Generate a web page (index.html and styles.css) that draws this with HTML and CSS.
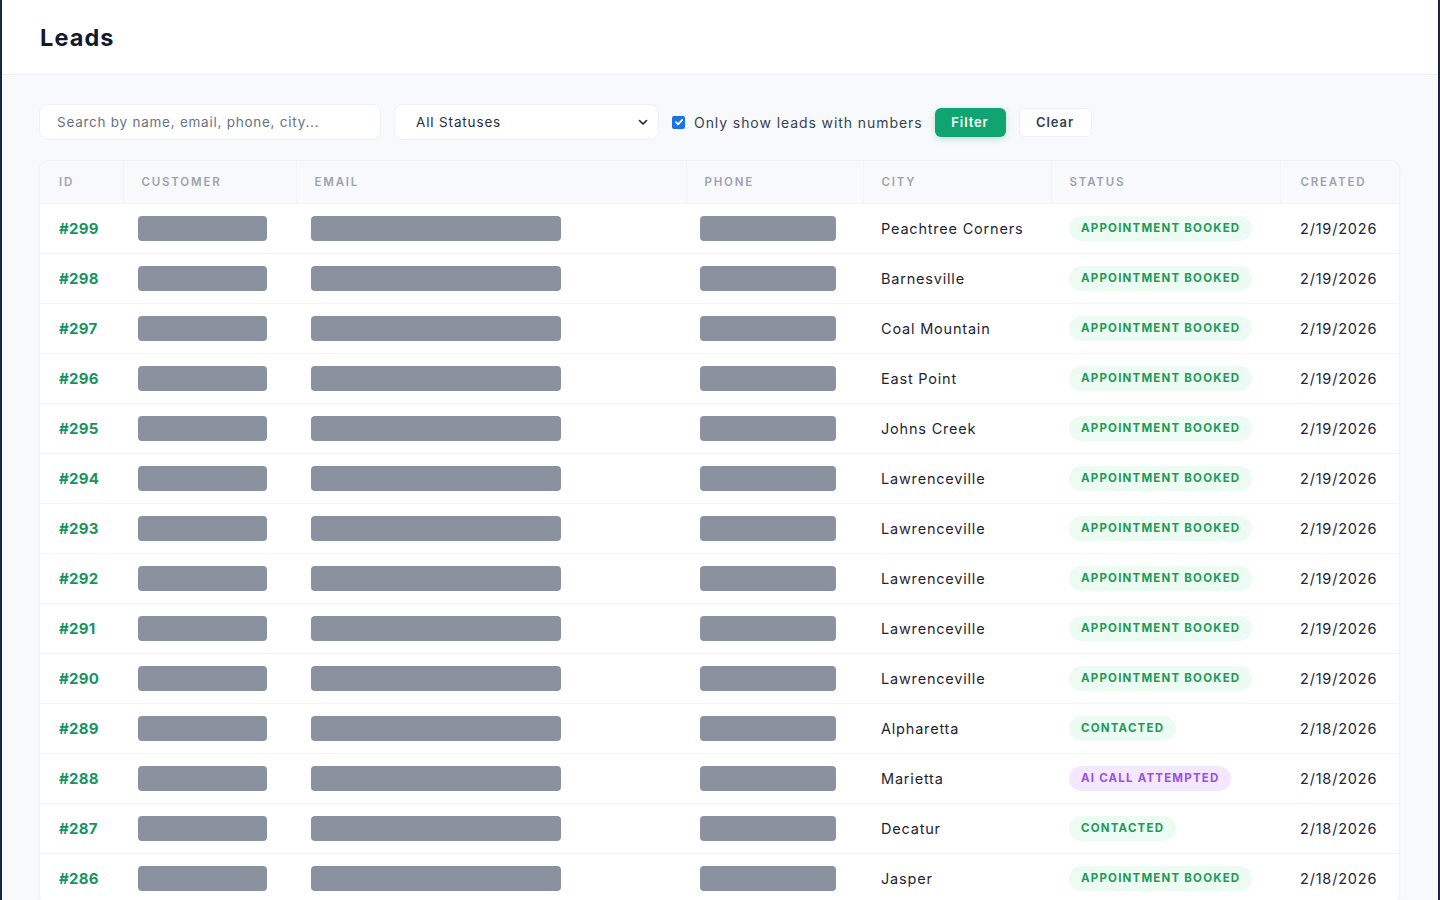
FILE: index.html
```html
<!DOCTYPE html>
<html lang="en">
<head>
<meta charset="utf-8">
<title>Leads</title>
<link rel="stylesheet" href="styles.css">
</head>
<body>
<header class="topbar">
  <h1 class="title">Leads</h1>
</header>
<main class="main">
  <div class="filters">
    <input class="search" type="text" placeholder="Search by name, email, phone, city...">
    <div class="select">
      <span>All Statuses</span>
      <svg class="chev" width="12" height="12" viewBox="0 0 12 12"><path d="M2.5 4.5 6 8l3.5-3.5" fill="none" stroke="#222" stroke-width="1.6" stroke-linecap="round" stroke-linejoin="round"/></svg>
    </div>
    <label class="check">
      <span class="box"><svg width="10" height="10" viewBox="0 0 10 10"><path d="M2 5.2 4.1 7.3 8.2 2.8" fill="none" stroke="#fff" stroke-width="1.8" stroke-linecap="round" stroke-linejoin="round"/></svg></span>
      <span>Only show leads with numbers</span>
    </label>
    <button class="btn btn-primary">Filter</button>
    <button class="btn btn-light">Clear</button>
  </div>

  <div class="card">
    <table class="leads">
      <colgroup>
        <col class="c-id"><col class="c-cust"><col class="c-email"><col class="c-phone"><col class="c-city"><col class="c-status"><col class="c-created">
      </colgroup>
      <thead>
        <tr><th>ID</th><th>Customer</th><th>Email</th><th>Phone</th><th>City</th><th>Status</th><th>Created</th></tr>
      </thead>
      <tbody>
        <tr><td class="id">#299</td><td><span class="bar bar-c"></span></td><td><span class="bar bar-e"></span></td><td><span class="bar bar-p"></span></td><td>Peachtree Corners</td><td><span class="badge green">Appointment Booked</span></td><td>2/19/2026</td></tr>
        <tr><td class="id">#298</td><td><span class="bar bar-c"></span></td><td><span class="bar bar-e"></span></td><td><span class="bar bar-p"></span></td><td>Barnesville</td><td><span class="badge green">Appointment Booked</span></td><td>2/19/2026</td></tr>
        <tr><td class="id">#297</td><td><span class="bar bar-c"></span></td><td><span class="bar bar-e"></span></td><td><span class="bar bar-p"></span></td><td>Coal Mountain</td><td><span class="badge green">Appointment Booked</span></td><td>2/19/2026</td></tr>
        <tr><td class="id">#296</td><td><span class="bar bar-c"></span></td><td><span class="bar bar-e"></span></td><td><span class="bar bar-p"></span></td><td>East Point</td><td><span class="badge green">Appointment Booked</span></td><td>2/19/2026</td></tr>
        <tr><td class="id">#295</td><td><span class="bar bar-c"></span></td><td><span class="bar bar-e"></span></td><td><span class="bar bar-p"></span></td><td>Johns Creek</td><td><span class="badge green">Appointment Booked</span></td><td>2/19/2026</td></tr>
        <tr><td class="id">#294</td><td><span class="bar bar-c"></span></td><td><span class="bar bar-e"></span></td><td><span class="bar bar-p"></span></td><td>Lawrenceville</td><td><span class="badge green">Appointment Booked</span></td><td>2/19/2026</td></tr>
        <tr><td class="id">#293</td><td><span class="bar bar-c"></span></td><td><span class="bar bar-e"></span></td><td><span class="bar bar-p"></span></td><td>Lawrenceville</td><td><span class="badge green">Appointment Booked</span></td><td>2/19/2026</td></tr>
        <tr><td class="id">#292</td><td><span class="bar bar-c"></span></td><td><span class="bar bar-e"></span></td><td><span class="bar bar-p"></span></td><td>Lawrenceville</td><td><span class="badge green">Appointment Booked</span></td><td>2/19/2026</td></tr>
        <tr><td class="id">#291</td><td><span class="bar bar-c"></span></td><td><span class="bar bar-e"></span></td><td><span class="bar bar-p"></span></td><td>Lawrenceville</td><td><span class="badge green">Appointment Booked</span></td><td>2/19/2026</td></tr>
        <tr><td class="id">#290</td><td><span class="bar bar-c"></span></td><td><span class="bar bar-e"></span></td><td><span class="bar bar-p"></span></td><td>Lawrenceville</td><td><span class="badge green">Appointment Booked</span></td><td>2/19/2026</td></tr>
        <tr><td class="id">#289</td><td><span class="bar bar-c"></span></td><td><span class="bar bar-e"></span></td><td><span class="bar bar-p"></span></td><td>Alpharetta</td><td><span class="badge green">Contacted</span></td><td>2/18/2026</td></tr>
        <tr><td class="id">#288</td><td><span class="bar bar-c"></span></td><td><span class="bar bar-e"></span></td><td><span class="bar bar-p"></span></td><td>Marietta</td><td><span class="badge purple">AI Call Attempted</span></td><td>2/18/2026</td></tr>
        <tr><td class="id">#287</td><td><span class="bar bar-c"></span></td><td><span class="bar bar-e"></span></td><td><span class="bar bar-p"></span></td><td>Decatur</td><td><span class="badge green">Contacted</span></td><td>2/18/2026</td></tr>
        <tr><td class="id">#286</td><td><span class="bar bar-c"></span></td><td><span class="bar bar-e"></span></td><td><span class="bar bar-p"></span></td><td>Jasper</td><td><span class="badge green">Appointment Booked</span></td><td>2/18/2026</td></tr>
      </tbody>
    </table>
  </div>
</main>
</body>
</html>
```

FILE: styles.css
```css
* { box-sizing: border-box; }
html, body { margin: 0; padding: 0; }
body {
  font-family: Inter, "Noto Sans", sans-serif;
  color: #1f2433;
  background: #f8f9fb;
  border-left: 2px solid #1b2440;
  border-right: 2px solid #1b2440;
  min-height: 900px;
  overflow: hidden;
}
.topbar {
  height: 75px;
  background: #fff;
  border-bottom: 1px solid #eef0f3;
  display: flex;
  align-items: center;
  padding-left: 38px;
}
.title {
  margin: 0;
  font-size: 23.5px;
  font-weight: 700;
  color: #141a2e;
  letter-spacing: 1.1px;
}
.main { padding: 29px 38px 0 37px; }
.filters {
  display: flex;
  align-items: center;
  height: 36px;
  margin-bottom: 20px;
}
.search {
  width: 342px;
  height: 36px;
  border: 1px solid #eef0f3;
  border-radius: 9px;
  background: #fff;
  padding: 0 17px;
  font: 13.5px Inter, sans-serif;
  color: #333;
  outline: none;
  letter-spacing: 0.75px;
}
.search::placeholder { color: #6b7280; }
.select {
  margin-left: 13px;
  width: 265px;
  height: 36px;
  border: 1px solid #eef0f3;
  border-radius: 9px;
  background: #fff;
  display: flex;
  align-items: center;
  justify-content: space-between;
  padding: 0 9px 0 21px;
  font-size: 13.5px;
  color: #2a2f3d;
  letter-spacing: 0.85px;
}
.check {
  margin-left: 13px;
  display: flex;
  align-items: center;
  gap: 9px;
  font-size: 14px;
  color: #374151;
  letter-spacing: 0.92px;
}
.box {
  width: 13px; height: 13px;
  border-radius: 2px;
  background: #1a73e8;
  display: flex; align-items: center; justify-content: center;
}
.btn {
  height: 29px;
  border-radius: 6px;
  font: 600 13px Inter, sans-serif;
  letter-spacing: 0.9px;
  padding: 0;
  cursor: pointer;
}
.btn-primary {
  margin-left: 12px;
  background: #10a570;
  color: #fff;
  border: none;
  width: 71px;
  box-shadow: 0 2px 6px rgba(16,165,112,0.25);
}
.btn-light {
  margin-left: 13px;
  background: #fff;
  color: #374151;
  border: 1px solid #eef0f3;
  width: 73px;
}
.card {
  background: #fff;
  border: 1px solid #f0f2f5;
  border-radius: 10px;
  overflow: hidden;
  box-shadow: 0 1px 3px rgba(15,23,42,0.04);
}
.leads {
  width: 100%;
  border-collapse: collapse;
  table-layout: fixed;
}
.c-id { width: 83px; }
.c-cust { width: 173px; }
.c-email { width: 390px; }
.c-phone { width: 177px; }
.c-city { width: 188px; }
.c-status { width: 229px; }
.c-created { width: 121px; }
.leads th {
  height: 42px;
  background: #f8f9fb;
  text-align: left;
  padding: 0 18px;
  font-size: 11.5px;
  font-weight: 600;
  letter-spacing: 1.8px;
  text-transform: uppercase;
  color: #9aa3b1;
  border-left: 1px solid #f3f4f7;
  border-bottom: 1px solid #f0f2f5;
}
.leads th:first-child { border-left: none; padding-left: 19px; }
.leads th:last-child, .leads td:last-child { padding-left: 20px; padding-right: 0; }
.leads td {
  height: 50px;
  padding: 0 18px;
  font-size: 14.5px;
  color: #1f2433;
  letter-spacing: 0.8px;
  border-bottom: 1px solid #f2f4f6;
  white-space: nowrap;
}
.leads td.id {
  font-weight: 700;
  color: #17935f;
  font-size: 15px;
  letter-spacing: 0.3px;
  padding-left: 19px;
}
.bar {
  display: block;
  height: 25px;
  margin-left: -3px;
  background: #89929e;
  border-radius: 4px;
}
.bar-c { width: 129px; }
.bar-e { width: 250px; }
.bar-p { width: 136px; margin-left: -4px; }
.badge {
  display: inline-block;
  height: 25px;
  line-height: 25px;
  padding: 0 12px;
  border-radius: 13px;
  font-size: 11.5px;
  font-weight: 700;
  letter-spacing: 1.2px;
  text-transform: uppercase;
}
.badge.green { background: #edfcf2; color: #1f9a58; }
.badge.purple { background: #f3e8ff; color: #9b51e0; }
```
